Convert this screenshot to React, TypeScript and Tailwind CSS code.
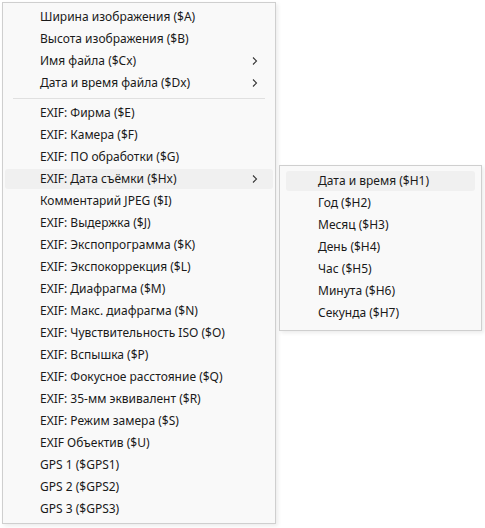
import React from "react";

type Item = { label: string; sub?: boolean; active?: boolean } | "sep";

const items: Item[] = [
  { label: "Ширина изображения ($A)" },
  { label: "Высота изображения ($B)" },
  { label: "Имя файла ($Cx)", sub: true },
  { label: "Дата и время файла ($Dx)", sub: true },
  "sep",
  { label: "EXIF: Фирма ($E)" },
  { label: "EXIF: Камера ($F)" },
  { label: "EXIF: ПО обработки ($G)" },
  { label: "EXIF: Дата съёмки ($Hx)", sub: true, active: true },
  { label: "Комментарий JPEG ($I)" },
  { label: "EXIF: Выдержка ($J)" },
  { label: "EXIF: Экспопрограмма ($K)" },
  { label: "EXIF: Экспокоррекция ($L)" },
  { label: "EXIF: Диафрагма ($M)" },
  { label: "EXIF: Макс. диафрагма ($N)" },
  { label: "EXIF: Чувствительность ISO ($O)" },
  { label: "EXIF: Вспышка ($P)" },
  { label: "EXIF: Фокусное расстояние ($Q)" },
  { label: "EXIF: 35-мм эквивалент ($R)" },
  { label: "EXIF: Режим замера ($S)" },
  { label: "EXIF Объектив ($U)" },
  { label: "GPS 1 ($GPS1)" },
  { label: "GPS 2 ($GPS2)" },
  { label: "GPS 3 ($GPS3)" },
];

const subItems = [
  "Дата и время ($H1)",
  "Год ($H2)",
  "Месяц ($H3)",
  "День ($H4)",
  "Час ($H5)",
  "Минута ($H6)",
  "Секунда ($H7)",
];

function Chevron() {
  return (
    <svg width="8" height="10" viewBox="0 0 8 10" className="text-[#333]">
      <path d="M2 1.5 L5.5 5 L2 8.5" fill="none" stroke="currentColor" strokeWidth="1.1" />
    </svg>
  );
}

export default function App() {
  return (
    <div
      className="relative w-[485px] h-[528px] bg-white text-[12px] text-[#1a1a1a]"
      style={{ fontFamily: '"Noto Sans", "Open Sans", sans-serif' }}
    >
      <div className="absolute left-[2px] top-[2px] w-[274px] h-[522px] bg-[#f9f9f9] border border-[#cfcfcf] shadow-[2px_2px_4px_rgba(0,0,0,0.08)] py-[3px] px-[2px] flex flex-col">
        {items.map((it, i) =>
          it === "sep" ? (
            <div key={i} className="h-[8px] flex items-center px-[8px]">
              <div className="h-px w-full bg-[#e0e0e0]" />
            </div>
          ) : (
            <div key={i} className="h-[22px] py-[1px]">
              <div
                className={
                  "h-full flex items-center pl-[35px] pr-[14px] rounded-[3px] " +
                  (it.active ? "bg-[#f0f0f0]" : "")
                }
              >
                <span className="flex-1 leading-none">{it.label}</span>
                {it.sub && <Chevron />}
              </div>
            </div>
          )
        )}
      </div>
      <div className="absolute left-[279px] top-[165px] w-[203px] h-[166px] bg-[#f9f9f9] border border-[#cfcfcf] shadow-[2px_2px_4px_rgba(0,0,0,0.08)] pt-[4px] px-[6px] flex flex-col">
        {subItems.map((s, i) => (
          <div key={i} className="h-[22px] py-[1px]">
            <div
              className={
                "h-full flex items-center pl-[32px] rounded-[3px] " + (i === 0 ? "bg-[#f0f0f0]" : "")
              }
            >
              <span className="leading-none">{s}</span>
            </div>
          </div>
        ))}
      </div>
    </div>
  );
}
